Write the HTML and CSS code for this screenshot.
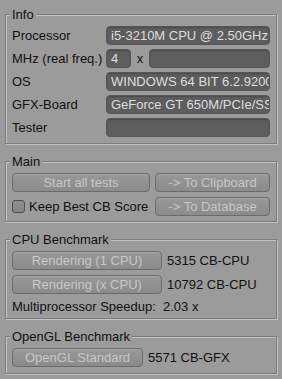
FILE: index.html
```html
<!DOCTYPE html>
<html lang="en">
<head>
<meta charset="UTF-8" />
<title>CINEBENCH</title>
<link rel="stylesheet" href="styles.css">
</head>
<body>
<div id="panel">

  <fieldset class="group group-info">
    <legend>Info</legend>
    <div class="row">
      <span class="label">Processor</span>
      <div class="field">i5-3210M CPU @ 2.50GHz</div>
    </div>
    <div class="row">
      <span class="label">MHz (real freq.)</span>
      <div class="field field-small">4</div>
      <span class="times">x</span>
      <div class="field"></div>
    </div>
    <div class="row">
      <span class="label">OS</span>
      <div class="field">WINDOWS 64 BIT 6.2.9200</div>
    </div>
    <div class="row">
      <span class="label">GFX-Board</span>
      <div class="field">GeForce GT 650M/PCIe/SSE2</div>
    </div>
    <div class="row">
      <span class="label">Tester</span>
      <div class="field"></div>
    </div>
  </fieldset>

  <fieldset class="group">
    <legend>Main</legend>
    <div class="main-grid">
      <button class="btn">Start all tests</button>
      <button class="btn">-&gt; To Clipboard</button>
      <label class="check"><span class="box"></span>Keep Best CB Score</label>
      <button class="btn">-&gt; To Database</button>
    </div>
  </fieldset>

  <fieldset class="group group-cpu">
    <legend>CPU Benchmark</legend>
    <div class="row bench">
      <button class="btn btn-cpu">Rendering (1 CPU)</button>
      <span class="result">5315 CB-CPU</span>
    </div>
    <div class="row bench">
      <button class="btn btn-cpu">Rendering (x CPU)</button>
      <span class="result">10792 CB-CPU</span>
    </div>
    <div class="speedup">Multiprocessor Speedup:&nbsp; 2.03 x</div>
  </fieldset>

  <fieldset class="group group-gl">
    <legend>OpenGL Benchmark</legend>
    <div class="row bench">
      <button class="btn btn-gl">OpenGL Standard</button>
      <span class="result">5571 CB-GFX</span>
    </div>
  </fieldset>

</div>
</body>
</html>
```

FILE: styles.css
```css
body {
  margin: 0;
  background: #9b9b9b;
  font-family: "Liberation Sans", Arial, sans-serif;
  font-size: 13px;
  color: #141010;
}
#panel {
  padding-top: 7px;
}
.group {
  margin: 0 5px 10px;
  padding: 4px 6px 5px 6px;
  border: 1px solid #7c7c7c;
  box-shadow: inset 1px 1px 0 #c2c2c2, 1px 1px 0 #c2c2c2;
  min-width: 0;
}
.group-info {
  padding-bottom: 6px;
}
.group-cpu {
  padding-bottom: 3px;
}
.group-gl {
  padding-bottom: 6px;
}
.group legend {
  margin-left: -2px;
  padding: 0 2px;
  line-height: 15px;
  background: #9b9b9b;
}
.row {
  display: flex;
  align-items: center;
  height: 19px;
  margin-bottom: 4px;
}
.row:last-child {
  margin-bottom: 0;
}
.label {
  width: 94px;
  flex: none;
  white-space: nowrap;
}
.field {
  flex: 1;
  height: 19px;
  box-sizing: border-box;
  padding: 0 4px;
  line-height: 18px;
  background: #5d5d5d;
  border: 1px solid #565656;
  border-radius: 4px;
  box-shadow: inset 0 1px 1px #4c4c4c;
  color: #dedede;
  white-space: nowrap;
  overflow: hidden;
}
.field-small {
  flex: none;
  width: 25px;
}
.times {
  width: 18px;
  flex: none;
  text-align: center;
}
.btn {
  height: 19px;
  box-sizing: border-box;
  padding: 0;
  font: inherit;
  line-height: 17px;
  color: #c8c8c8;
  background: linear-gradient(#989898, #8b8b8b);
  border: 1px solid #6c6c6c;
  border-radius: 4px;
  box-shadow: inset 0 1px 0 #a6a6a6;
  text-align: center;
  white-space: nowrap;
}
.main-grid {
  display: grid;
  grid-template-columns: 138px 1fr;
  grid-auto-rows: 19px;
  column-gap: 5px;
  row-gap: 5px;
}
.check {
  display: flex;
  align-items: center;
  gap: 4px;
  white-space: nowrap;
}
.check .box {
  width: 11px;
  height: 11px;
  border: 1px solid #4e4e4e;
  border-radius: 3px;
  background: linear-gradient(#8f8f8f, #858585);
}
.bench {
  margin-bottom: 5px;
}
.btn-cpu {
  width: 150px;
}
.btn-gl {
  width: 131px;
}
.result {
  margin-left: 5px;
}
.speedup {
  line-height: 16px;
}
```
